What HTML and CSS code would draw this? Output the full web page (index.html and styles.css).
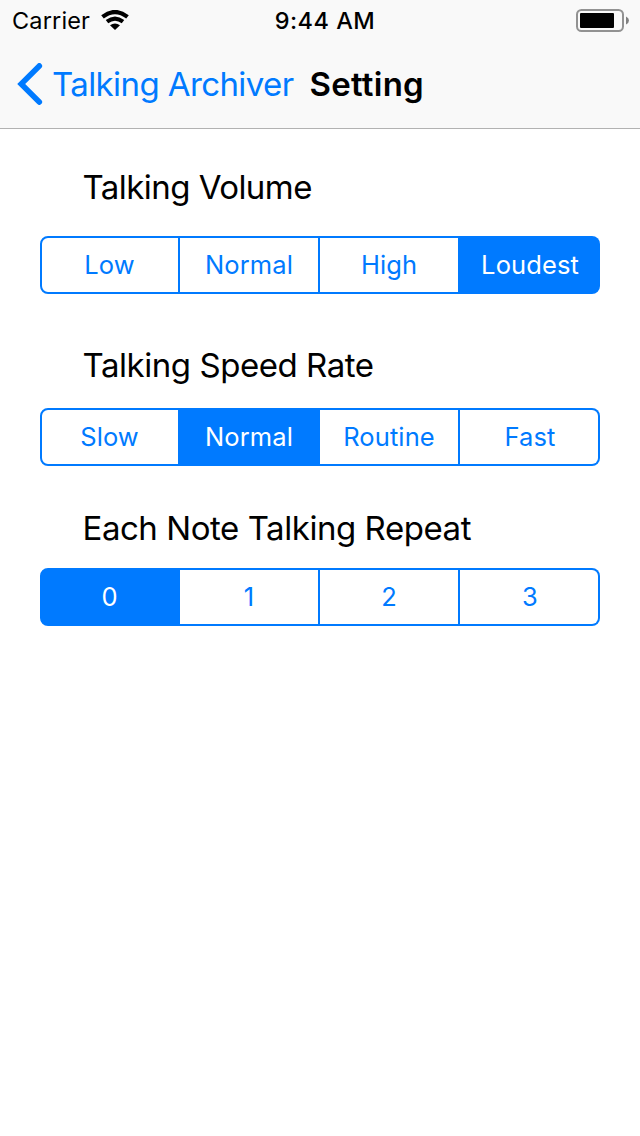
FILE: index.html
```
<!DOCTYPE html>
<html lang="en">
<head>
<meta charset="UTF-8">
<meta name="viewport" content="width=device-width, initial-scale=1.0">
<title>Setting</title>
<link rel="stylesheet" href="styles.css">
</head>
<body>
<header class="header">
    <div class="status-bar">
        <div class="status-left">
            <span class="carrier">Carrier</span>
            <svg class="wifi" width="28" height="20" viewBox="0 0 28 20">
                <path d="M1.5 6.9 Q14 -2.9 26.5 6.9" fill="none" stroke="#000" stroke-width="4.2"/>
                <path d="M6 11.7 Q14 5.5 22 11.7" fill="none" stroke="#000" stroke-width="4"/>
                <path d="M9 15.3 Q14 11.8 19 15.3 L14 20 Z"/>
            </svg>
        </div>
        <span class="time">9:44 AM</span>
        <svg class="battery" width="53" height="23" viewBox="0 0 53 23">
            <rect x="1" y="1" width="46" height="21" rx="4.5" fill="none" stroke="#929292" stroke-width="2"/>
            <rect x="4" y="4" width="34" height="15" rx="1"/>
            <path d="M50 7.5 Q53 9 53 11.5 Q53 14 50 15.5 Z" fill="#808080"/>
        </svg>
    </div>
    <nav class="nav-bar">
        <a href="#" class="btn-back">
            <svg width="26" height="42" viewBox="0 0 26 42">
                <path d="M22.3 2.9 L4.2 21 L22.3 39.1" fill="none" stroke="#007aff" stroke-width="5.6" stroke-linecap="round"/>
            </svg>
            <span class="back-text">Talking Archiver</span>
        </a>
        <h1 class="nav-title">Setting</h1>
    </nav>
</header>

<main class="settings">
    <section class="setting volume">
        <h2 class="label">Talking Volume</h2>
        <div class="segments">
            <button type="button">Low</button>
            <button type="button">Normal</button>
            <button type="button">High</button>
            <button type="button" class="selected">Loudest</button>
        </div>
    </section>
    <section class="setting speed">
        <h2 class="label">Talking Speed Rate</h2>
        <div class="segments">
            <button type="button">Slow</button>
            <button type="button" class="selected">Normal</button>
            <button type="button">Routine</button>
            <button type="button">Fast</button>
        </div>
    </section>
    <section class="setting repeat">
        <h2 class="label">Each Note Talking Repeat</h2>
        <div class="segments">
            <button type="button" class="selected">0</button>
            <button type="button">1</button>
            <button type="button">2</button>
            <button type="button">3</button>
        </div>
    </section>
</main>

<script>
    // Only one option can be selected in each row
    document.querySelectorAll('.segments').forEach((group) => {
        group.addEventListener('click', (event) => {
            if (event.target.tagName !== 'BUTTON') return;
            group.querySelectorAll('button').forEach((b) => b.classList.remove('selected'));
            event.target.classList.add('selected');
        });
    });
</script>
</body>
</html>
```
FILE: styles.css
```
* {
    box-sizing: border-box;
}
body {
    margin: 0;
    min-height: 100vh;
    background-color: #fff;
    color: #000;
    font-family: Inter, "Liberation Sans", sans-serif;
}

/* Status bar and navigation */
.header {
    height: 129px;
    background-color: #f9f9f9;
    border-bottom: 1px solid #b2b2b2;
}
.status-bar {
    display: grid;
    grid-template-columns: 1fr auto 1fr;
    align-items: center;
    height: 40px;
    padding: 0 11px 0 12px;
    line-height: 40px;
}
.status-left {
    display: flex;
    align-items: center;
    gap: 11px;
}
.carrier {
    padding-top: 2px;
    font-size: 23.5px;
    line-height: 38px;
    letter-spacing: 0.15px;
}
.time {
    padding: 2px 0 0 9px;
    font-size: 23.5px;
    font-weight: 500;
    line-height: 38px;
    letter-spacing: 0.5px;
}
.battery {
    justify-self: end;
}
.nav-bar {
    display: flex;
    align-items: center;
    gap: 16px;
    height: 88px;
    padding-left: 17px;
    font-size: 33px;
    line-height: 42px;
}
.btn-back {
    display: flex;
    align-items: center;
    gap: 9px;
    color: #007aff;
    text-decoration: none;
}
.back-text {
    letter-spacing: -0.6px;
}
.nav-title {
    margin: 0;
    font-size: 33px;
    font-weight: 600;
    letter-spacing: 0.25px;
}

/* Settings */
.settings {
    padding: 37px 40px 0;
}
.label {
    margin: 0 0 28px;
    padding-left: 42.5px;
    font-size: 33px;
    font-weight: 400;
    line-height: 42px;
    letter-spacing: -0.45px;
}
.volume {
    margin-bottom: 50px;
}
.volume .label {
    letter-spacing: -0.55px;
}
.speed {
    margin-bottom: 41px;
}
.speed .label {
    margin-bottom: 22px;
}
.repeat .label {
    margin-bottom: 19px;
}
.segments {
    display: grid;
    grid-template-columns: repeat(4, 1fr);
}
.segments button {
    height: 58px;
    padding: 0 0 2px;
    border: 2px solid #007aff;
    border-left-width: 0;
    background-color: #fff;
    color: #007aff;
    font-family: inherit;
    font-size: 25.5px;
    letter-spacing: 0.1px;
    cursor: pointer;
}
.segments button:first-child {
    border-left-width: 2px;
    padding-right: 1px;
    border-radius: 8px 0 0 8px;
}
.segments button:last-child {
    padding-left: 2px;
    border-radius: 0 8px 8px 0;
}
.segments .selected {
    background-color: #007aff;
    color: #fff;
}
```
